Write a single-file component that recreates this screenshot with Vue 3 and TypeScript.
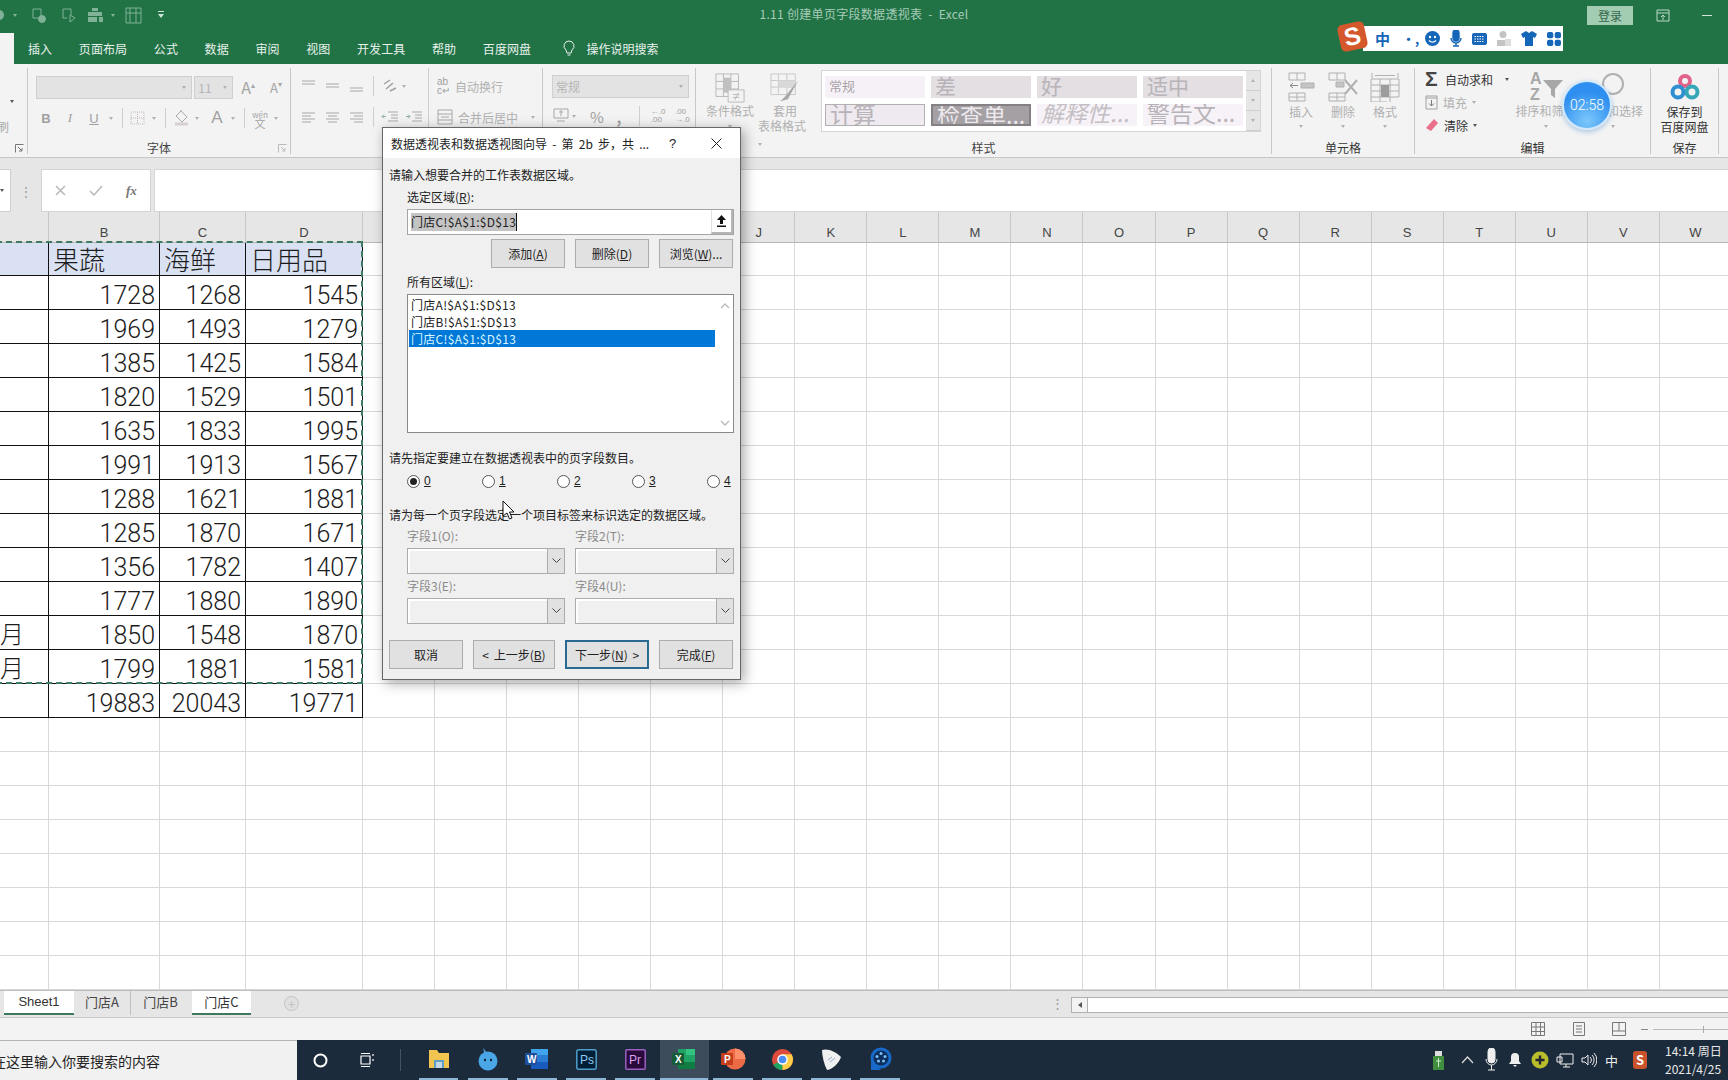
<script setup lang="ts">
const cols = ['', 'B', 'C', 'D', 'E', 'F', 'G', 'H', 'I', 'J', 'K', 'L', 'M', 'N', 'O', 'P', 'Q', 'R', 'S', 'T', 'U', 'V', 'W']
const data: string[][] = [
  ['', '果蔬', '海鲜', '日用品'],
  ['', '1728', '1268', '1545'],
  ['', '1969', '1493', '1279'],
  ['', '1385', '1425', '1584'],
  ['', '1820', '1529', '1501'],
  ['', '1635', '1833', '1995'],
  ['', '1991', '1913', '1567'],
  ['', '1288', '1621', '1881'],
  ['', '1285', '1870', '1671'],
  ['', '1356', '1782', '1407'],
  ['', '1777', '1880', '1890'],
  ['月', '1850', '1548', '1870'],
  ['月', '1799', '1881', '1581'],
  ['', '19883', '20043', '19771'],
]
const rows = Array.from({ length: 22 }, (_, i) => i)
const colIdx = cols.map((_, i) => i)
function cell(r: number, c: number): string {
  return r < data.length && c < 4 ? data[r][c] : ''
}
function cellClass(r: number, c: number): string[] {
  const out: string[] = []
  if (r < data.length && c < 4) out.push('tb')
  if (r === 0 && c < 4) out.push('th')
  if (c === 0) out.push('first')
  return out
}
const alignTop = ['M1 2h13M1 5h13', 'M1 5h13M1 8h13', 'M1 9h13M1 12h13']
const alignRow = ['M1 3h13M1 6h9M1 9h13M1 12h9', 'M1 3h13M3 6h9M1 9h13M3 12h9', 'M1 3h13M5 6h9M1 9h13M5 12h9']
const radios = ['0', '1', '2', '3', '4']
const fields = [
  ['字段1(O):', '字段2(T):'],
  ['字段3(E):', '字段4(U):'],
]
const tabs = ['插入', '页面布局', '公式', '数据', '审阅', '视图', '开发工具', '帮助', '百度网盘']
const styleCells = [
  { t: '常规', c: 's-norm' },
  { t: '差', c: 's-bad' },
  { t: '好', c: 's-bad' },
  { t: '适中', c: 's-bad' },
  { t: '计算', c: 's-calc' },
  { t: '检查单...', c: 's-check' },
  { t: '解释性...', c: 's-expl' },
  { t: '警告文...', c: 's-warn' },
]
const runs = ['u1', 'u2', 'u3', 'u4', 'u5', 'u6', 'u7', 'u8', 'u9', 'u10']
</script>

<template>
  <div class="page">
    <!-- title bar -->
    <header class="titlebar">
      <div class="qat">
        <svg class="q1" width="10" height="14" viewBox="0 0 10 14"><circle cx="1" cy="7" r="5" fill="#7fb296" /></svg>
        <i class="caret q-c1"></i>
        <svg class="q2" width="16" height="17" viewBox="0 0 16 17" fill="none" stroke="#7fb296"><path d="M2 2h8v7M2 2v9h5" /><circle cx="11" cy="12" r="3.500" fill="#7fb296" /></svg>
        <svg class="q3" width="16" height="17" viewBox="0 0 16 17" fill="none" stroke="#7fb296"><path d="M2 2h8v6M2 2v9h4M9 8v7l5-4z" /></svg>
        <svg class="q4" width="18" height="16" viewBox="0 0 18 16" fill="#7fb296"><path d="M5 1h6v3H5zM1 5h14v4H1zM1 10h9v5H1zM12 10h4v5h-4z" /></svg>
        <i class="caret q-c2"></i>
        <svg class="q5" width="17" height="17" viewBox="0 0 17 17" fill="none" stroke="#7fb296"><path d="M1 1h15v15H1zM5 1v15M11 1v15M1 6h15" /></svg>
        <svg class="q6" width="8" height="10" viewBox="0 0 8 10" fill="#cfe3d8"><path d="M1 1h6v1H1zM1 4h6L4 8z" /></svg>
      </div>
      <div class="doc-title">1.11 创建单页字段数据透视表&nbsp; -&nbsp; Excel</div>
      <div class="win">
        <span class="login">登录</span>
        <svg class="win-box" width="14" height="13" viewBox="0 0 14 13" fill="none" stroke="#bcd8c8"><path d="M1 1h12v11H1zM1 4h12M7 11V6M5 8l2-2 2 2" /></svg>
        <i class="win-min"></i>
      </div>
    </header>

    <!-- tab row -->
    <nav class="tabrow">
      <span class="home"></span>
      <span v-for="t in tabs" :key="t" class="tab">{{ t }}</span>
      <svg class="bulb" width="12" height="17" viewBox="0 0 12 17" fill="none" stroke="#e8f1ec"><path d="M6 1a5 5 0 0 0-3 9l1 3h4l1-3A5 5 0 0 0 6 1zM4.500 15h3" /></svg>
      <span class="search">操作说明搜索</span>
    </nav>

    <!-- ribbon -->
    <section class="ribbon">
      <div class="rg g-clip">
        <i class="caret dk clip-c"></i>
        <span class="clip-t">刷</span>
        <svg class="launch" width="9" height="9" viewBox="0 0 9 9" fill="none" stroke="#777"><path d="M.5 8.500v-8h8M3 3l4 4M7 4v3H4" /></svg>
      </div>

      <div class="rg g-font">
        <div class="r1">
          <div class="combo c-font"><i class="caret"></i></div>
          <div class="combo c-size"><span>11</span><i class="caret"></i></div>
          <span class="bigA">A<sup>▴</sup></span>
          <span class="bigA small">A<sup>▾</sup></span>
        </div>
        <div class="r2">
          <b class="fi w24">B</b>
          <em class="fi w24 it">I</em>
          <u class="fi w24">U</u>
          <i class="slot w10"><i class="caret"></i></i>
          <i class="vs w12"></i>
          <svg class="ic w20" width="20" height="16" viewBox="0 0 20 16" fill="none" stroke="#c0b8c0" stroke-dasharray="1 1"><path d="M3 2h13v12H3zM9.500 2v12M3 8h13" /></svg>
          <i class="slot w12"><i class="caret"></i></i>
          <i class="vs w10"></i>
          <svg class="ic w22" width="22" height="18" viewBox="0 0 22 18" fill="none" stroke="#a8a8a8"><path d="M11 2l6 6-5 5-6-6zM11 2V1" /><path d="M5 15h13" stroke="#d8d0d0" stroke-width="3" /></svg>
          <i class="slot w10"><i class="caret"></i></i>
          <span class="fi fA">A</span>
          <i class="slot w6"><i class="caret"></i></i>
          <i class="vs w16"></i>
          <span class="wen"><small>wén</small><br />文</span>
          <i class="slot w16"><i class="caret"></i></i>
        </div>
        <div class="lbl">字体</div>
        <svg class="launch" width="9" height="9" viewBox="0 0 9 9" fill="none" stroke="#bbb"><path d="M.5 8.500v-8h8M3 3l4 4M7 4v3H4" /></svg>
      </div>

      <div class="rg g-align">
        <div class="al-left">
          <div class="r1 al-r">
            <svg v-for="p in alignTop" :key="p" class="al" width="15" height="15" viewBox="0 0 15 15" fill="none" stroke="#a8a8a8"><path :d="p" /></svg>
            <i class="vs w1"></i>
            <svg class="ic m-2" width="18" height="16" viewBox="0 0 18 16" fill="none" stroke="#a0a0a0" stroke-width="1.500"><path d="M3 6l6-4M5 11l7-6M9 13l6-3" /></svg>
            <i class="slot w8 m-c"><i class="caret"></i></i>
          </div>
          <div class="r2 al-r">
            <svg v-for="p in alignRow" :key="p" class="al" width="15" height="15" viewBox="0 0 15 15" fill="none" stroke="#a8a8a8"><path :d="p" /></svg>
            <i class="vs w1"></i>
            <svg class="ic m-2" width="18" height="14" viewBox="0 0 18 14" fill="none" stroke="#a8a8a8"><path d="M7 2h10M10 5h7M10 8h7M7 11h10" /><path d="M5 6.500H1M3 4.500l-2 2 2 2" stroke="#8fb0a0" /></svg>
            <svg class="ic m-3" width="18" height="14" viewBox="0 0 18 14" fill="none" stroke="#a8a8a8"><path d="M7 2h10M10 5h7M10 8h7M7 11h10" /><path d="M1 6.500h4M3 4.500l2 2-2 2" stroke="#8fb0a0" /></svg>
          </div>
        </div>
        <i class="vline"></i>
        <div class="al-right">
          <div class="wrap-row"><span class="ab">ab<br />c↵</span><span class="fade">自动换行</span></div>
          <div class="wrap-row merge"><svg width="16" height="16" viewBox="0 0 16 16" fill="none" stroke="#a8a8a8"><path d="M1 1h14v14H1zM1 5h14M1 11h14M4 8h8" /></svg><span class="fade">合并后居中</span><i class="caret"></i></div>
        </div>
      </div>

      <div class="rg g-num">
        <div class="combo c-num"><span>常规</span><i class="caret"></i></div>
        <div class="r2 num-r">
          <svg class="ic" width="16" height="18" viewBox="0 0 16 18" fill="none" stroke="#a8a8a8"><path d="M1 2h14v9H1zM4 14h8M6 5h4M8 3v6" /></svg>
          <i class="slot w10"><i class="caret"></i></i>
          <span class="pct">%</span>
          <span class="comma">,</span>
          <i class="vs w18"></i>
          <span class="dec">←.0<br />.00</span>
          <span class="dec d2">.00<br />→.0</span>
        </div>
      </div>

      <div class="rg g-style">
        <div class="big-btn b-cond">
          <svg width="30" height="30" viewBox="0 0 32 32" fill="none" stroke="#b8b8b8"><path d="M1 1h24v24H1zM9 1v24M17 1v24M1 9h24M1 17h24" /><path d="M9 5h8v16H9z" fill="#c0c0c0" stroke="none" /><path d="M14 18h17v13H14z" fill="#f3f3f3" /><path d="M19 23h7M19 26h7M25 21l-4 8" /></svg>
          <span class="fade">条件格式</span>
          <i class="caret"></i>
        </div>
        <div class="big-btn b-table">
          <svg width="30" height="30" viewBox="0 0 32 32" fill="none" stroke="#c8c8c8"><path d="M1 1h26v22H1zM9 1v22M18 1v22M1 8h26M1 15h26" /><path d="M9 8h18v7H9z" fill="#d8d8d8" stroke="none" /><path d="M30 8L16 25l-5 5 8-2z" fill="#a8a8a8" stroke="none" /></svg>
          <span class="fade">套用</span>
          <span class="fade">表格格式 <i class="caret"></i></span>
        </div>
        <div class="gallery">
          <div class="g-cells">
            <span v-for="s in styleCells" :key="s.t" :class="['sc', s.c]"><span>{{ s.t }}</span></span>
          </div>
          <div class="g-scroll">
            <span><i class="caret up"></i></span><span><i class="caret"></i></span><span><i class="caret"></i></span>
          </div>
        </div>
        <div class="lbl">样式</div>
      </div>

      <div class="rg g-cellsgrp">
        <div class="cell-btns">
          <div class="big-btn">
            <svg width="30" height="30" viewBox="0 0 30 30" fill="none" stroke="#b0b0b0"><path d="M3 1h16v7H3zM11 1v7M3 21h16v8H3zM11 21v8M3 25h16" /><path d="M15 11h13v5H15z" fill="#c4c4c4" /><path d="M12 13.500H4M7 11l-3 2.500L7 16" stroke="#8a8a8a" /></svg>
            <span class="fade">插入</span><i class="caret"></i>
          </div>
          <div class="big-btn">
            <svg width="30" height="30" viewBox="0 0 30 30" fill="none" stroke="#b0b0b0"><path d="M1 1h16v7H1zM9 1v7M1 21h16v8H1zM9 21v8M1 25h16" /><path d="M8 10h8v5H8z" fill="#c4c4c4" /><path d="M17 8l12 14M29 8L17 22" stroke-width="2" /></svg>
            <span class="fade">删除</span><i class="caret"></i>
          </div>
          <div class="big-btn">
            <svg width="30" height="30" viewBox="0 0 30 30" fill="none" stroke="#b0b0b0"><path d="M2 1v5M28 1v5M5 3.500h20" /><path d="M1 7h28v18H1zM10 7v23M20 7v23M1 13h28M1 19h28M1 25v5h16" /><path d="M11 13h8v12h-8z" fill="#9c9c9c" stroke="none" /></svg>
            <span class="fade">格式</span><i class="caret"></i>
          </div>
        </div>
        <div class="lbl dk">单元格</div>
      </div>

      <div class="rg g-edit">
        <div class="ed-col">
          <div class="ed-row"><span class="sigma">Σ</span><span class="dk">自动求和</span><i class="caret dk e-gap"></i></div>
          <div class="ed-row"><svg width="13" height="15" viewBox="0 0 13 15" fill="none" stroke="#a0a0a0"><path d="M1 1h11v13H1zM1 3h11" /><path d="M6.500 5v6M4 8.500l2.500 2.500L9 8.500" stroke="#777" /></svg><span class="fade">填充</span><i class="caret"></i></div>
          <div class="ed-row"><svg width="14" height="14" viewBox="0 0 14 14"><path d="M9 1l4 4-7 8-5-3z" fill="#ea6f8a" /></svg><span class="dk">清除</span><i class="caret dk"></i></div>
        </div>
        <div class="big-btn b-sort">
          <svg width="36" height="30" viewBox="0 0 36 30"><text x="2" y="13" class="svgt">A</text><text x="2" y="29" class="svgt">Z</text><path d="M15 9h20l-8 9v9l-4-3v-6z" fill="#a8a8a8" /></svg>
          <span class="fade">排序和筛选</span><i class="caret"></i>
        </div>
        <div class="big-btn b-find">
          <svg width="24" height="30" viewBox="0 0 24 30" fill="none" stroke="#b0b0b0" stroke-width="2"><circle cx="12" cy="13" r="10" /></svg>
          <span class="fade">查找和选择</span><i class="caret"></i>
        </div>
        <div class="lbl dk">编辑</div>
      </div>

      <div class="rg g-save">
        <svg class="baidu" width="30" height="28" viewBox="0 0 30 28" fill="none" stroke-width="4"><circle cx="15" cy="8" r="5" stroke="#e0648a" /><circle cx="8" cy="19" r="5.500" stroke="#2f8fd0" /><circle cx="22" cy="19" r="5.500" stroke="#35a7b8" /></svg>
        <span class="dk sv">保存到</span>
        <span class="dk sv">百度网盘</span>
        <div class="lbl dk">保存</div>
      </div>
      <div class="g-end"></div>
    </section>

    <!-- formula bar -->
    <section class="fbar">
      <div class="namebox"><i class="caret dk"></i></div>
      <span class="fdots">⋮</span>
      <div class="fxbox">
        <svg width="11" height="11" viewBox="0 0 11 11" stroke="#b8b8b8" stroke-width="1.500"><path d="M1 1l9 9M10 1l-9 9" /></svg>
        <svg width="14" height="11" viewBox="0 0 14 11" fill="none" stroke="#b8b8b8" stroke-width="1.500"><path d="M1 6l4 4 8-9" /></svg>
        <em class="fx">fx</em>
      </div>
      <div class="finput"></div>
    </section>

    <!-- column headers -->
    <section class="colhead">
      <span v-for="c in cols" :key="c" class="ch">{{ c }}</span>
    </section>

    <!-- sheet -->
    <section class="sheet">
      <template v-for="r in rows" :key="r">
        <div v-for="c in colIdx" :key="c" class="gc" :class="cellClass(r, c)">{{ cell(r, c) }}</div>
      </template>
      <div class="ants"></div>
    </section>

    <!-- sheet tabs -->
    <section class="sheettabs">
      <span class="stab on s1">Sheet1</span>
      <span class="stab s2">门店A</span>
      <span class="stab s3">门店B</span>
      <span class="stab on s4">门店C</span>
      <span class="addsheet">+</span>
      <span class="hdots">⋮</span>
      <div class="hscroll"><span class="harrow"><i class="tri"></i></span></div>
    </section>

    <!-- status bar -->
    <section class="status">
      <svg width="14" height="14" viewBox="0 0 14 14" fill="none" stroke="#777"><path d="M.5.500h13v13H.5zM5 .5v13M9.500.5v13M.5 5h13M.5 9.500h13" /></svg>
      <svg class="st2" width="14" height="14" viewBox="0 0 14 14" fill="none" stroke="#777"><path d="M1.500.500h11v13h-11zM4 4h6M4 7h6M4 10h6" /></svg>
      <svg class="st3" width="14" height="14" viewBox="0 0 14 14" fill="none" stroke="#777"><path d="M.5.500h13v13H.5zM.5 9h13M7 .5V9" /></svg>
      <i class="zoom-minus"></i>
      <i class="zoom-track"><i class="zoom-tick"></i></i>
    </section>

    <!-- taskbar -->
    <footer class="taskbar">
      <div class="tsearch"><span>在这里输入你要搜索的内容</span></div>
      <svg class="cortana" width="15" height="15" viewBox="0 0 15 15" fill="none" stroke="#fff" stroke-width="2"><circle cx="7.500" cy="7.500" r="6" /></svg>
      <svg class="taskview" width="16" height="14" viewBox="0 0 16 14" fill="none" stroke="#fff"><path d="M1 3h9v8H1zM1 .5h9M1 13.500h9M13 1v2M13 6v2" stroke-width="1.200" /></svg>
      <i class="tsep"></i>
      <div class="apps">
        <span class="app">
          <svg width="22" height="20" viewBox="0 0 22 20"><path d="M1 1h8l2 3h10v15H1z" fill="#f2c550" /><path d="M6 11h10v8H6z" fill="#5f9fc6" /><path d="M8 13h6v6H8z" fill="#c4d9e4" /></svg>
        </span>
        <span class="app">
          <svg width="22" height="24" viewBox="0 0 22 24"><circle cx="11" cy="14" r="9.500" fill="#4aa6e6" /><path d="M6 1l5 6-3 2z" fill="#4aa6e6" /><circle cx="8" cy="13" r="1.200" fill="#123" /><circle cx="14" cy="13" r="1.200" fill="#123" /></svg>
        </span>
        <span class="app">
          <svg width="24" height="22" viewBox="0 0 24 22"><path d="M6 1h17v20H6z" fill="#2b7cd3" /><path d="M6 1h17v6H6z" fill="#41a5ee" /><path d="M6 14h17v7H6z" fill="#185abd" /><rect x="0" y="5" width="12" height="12" rx="1" fill="#1d4f9e" /><text x="2" y="15" class="wt">W</text></svg>
        </span>
        <span class="app">
          <svg width="21" height="21" viewBox="0 0 21 21"><rect x=".8" y=".8" width="19.400" height="19.400" rx="2" fill="#001e36" stroke="#4f9ecb" stroke-width="1.500" /><text x="4" y="15" class="ps">Ps</text></svg>
        </span>
        <span class="app">
          <svg width="21" height="21" viewBox="0 0 21 21"><rect x=".8" y=".8" width="19.400" height="19.400" rx="1" fill="#2a0a3a" stroke="#9b5fc0" stroke-width="1.500" /><text x="4" y="15" class="pr">Pr</text></svg>
        </span>
        <span class="app active">
          <svg width="24" height="22" viewBox="0 0 24 22"><path d="M6 1h17v20H6z" fill="#21a366" /><path d="M14 1h9v6h-9z" fill="#33c481" /><path d="M6 14h17v7H6z" fill="#107c41" /><rect x="0" y="5" width="12" height="12" rx="1" fill="#185c37" /><text x="3" y="15" class="wt">X</text></svg>
        </span>
        <span class="app">
          <svg width="25" height="22" viewBox="0 0 25 22"><circle cx="14" cy="11" r="10.500" fill="#ed6c47" /><path d="M14 .5A10.500 10.500 0 0 1 24.500 11H14z" fill="#ff8f6b" /><rect x="0" y="5" width="12" height="12" rx="1" fill="#c43e1c" /><text x="3" y="15" class="wt">P</text></svg>
        </span>
        <span class="app">
          <svg width="23" height="23" viewBox="0 0 24 24"><circle cx="12" cy="12" r="11" fill="#dd4b3e" /><path d="M12 12L2.500 17.500A11 11 0 0 0 12 23z" fill="#1da462" /><path d="M12 12v11a11 11 0 0 0 9.500-16.500H12z" fill="#ffcd46" /><circle cx="12" cy="12" r="5.500" fill="#fff" /><circle cx="12" cy="12" r="4" fill="#4c8bf5" /></svg>
        </span>
        <span class="app">
          <svg width="22" height="23" viewBox="0 0 22 23"><path d="M2 2c6-2 14 2 19 7-2 6-8 12-14 13C4 16 2 8 2 2z" fill="#f0f0f0" /><path d="M8 12l4-3M10 14l5-4" stroke="#9ac" fill="none" /></svg>
        </span>
        <span class="app">
          <svg width="23" height="24" viewBox="0 0 23 24"><circle cx="12" cy="11" r="10.500" fill="#1969c8" /><path d="M2 12v11h10z" fill="#1969c8" /><circle cx="12" cy="11" r="7.500" fill="#0c2f60" /><g fill="#7fc0f5"><circle cx="12" cy="6.500" r="1.500" /><circle cx="8" cy="9.500" r="1.500" /><circle cx="16" cy="9.500" r="1.500" /><circle cx="9.500" cy="14" r="1.500" /><circle cx="14.500" cy="14" r="1.500" /></g></svg>
        </span>
      </div>
      <div class="runbars"><i v-for="u in runs" :key="u" :class="['rb', u]"></i></div>
      <div class="tray">
        <svg width="11" height="19" viewBox="0 0 11 19"><path d="M2 0h7v5H2z" fill="#ddd" /><path d="M0 5h11v14H0z" fill="#3f8f3f" /><path d="M5.500 7v9M3 10h5" stroke="#cfe9cf" /></svg>
        <svg class="t-up" width="13" height="8" viewBox="0 0 13 8" fill="none" stroke="#ddd" stroke-width="1.200"><path d="M1 7l5.500-6L12 7" /></svg>
        <svg class="t-mic" width="13" height="24" viewBox="0 0 13 24" fill="none" stroke="#eee"><rect x="3" y="0" width="7" height="15" rx="3.500" fill="#eee" /><path d="M1 11a5.500 6 0 0 0 11 0M6.500 17v5M3 22h7" /></svg>
        <svg class="t-bell" width="14" height="16" viewBox="0 0 14 16" fill="#eee"><path d="M7 1a4 4 0 0 0-4 4v4l-2 3h12l-2-3V5a4 4 0 0 0-4-4zM5 13h4l-2 2z" /></svg>
        <svg class="t-plus" width="18" height="18" viewBox="0 0 18 18"><circle cx="9" cy="9" r="8.500" fill="#b9bd2c" /><path d="M9 4.500v9M4.500 9h9" stroke="#223" stroke-width="2.400" /></svg>
        <svg class="t-net" width="18" height="15" viewBox="0 0 18 15" fill="none" stroke="#eee"><path d="M4 1h13v10H4zM1 4h5v5H1zM10 11v3M7 14h7" /></svg>
        <svg class="t-vol" width="16" height="16" viewBox="0 0 16 16" fill="none" stroke="#eee"><path d="M1 6h3l3-3v10l-3-3H1zM9 5a4 4 0 0 1 0 6M11 3a7 7 0 0 1 0 10M13 1a10 10 0 0 1 0 14" /></svg>
        <span class="t-zh">中</span>
        <span class="t-s">S</span>
        <div class="clock"><span>14:14 周日</span><span>2021/4/25</span></div>
      </div>
    </footer>

    <!-- overlays -->
    <div class="sogou">
      <span class="sg-s">S</span>
      <span class="sg-zh">中</span>
      <span class="sg-p">•,</span>
      <svg width="15" height="15" viewBox="0 0 15 15"><circle cx="7.500" cy="7.500" r="7.500" fill="#1565b8" /><circle cx="5" cy="6" r="1.200" fill="#fff" /><circle cx="10" cy="6" r="1.200" fill="#fff" /><path d="M4 9.500c2 2 5 2 7 0" stroke="#fff" fill="none" stroke-width="1.300" /></svg>
      <svg width="12" height="17" viewBox="0 0 12 17" fill="none" stroke="#1565b8" stroke-width="1.400"><rect x="3" y="0" width="6" height="11" rx="3" fill="#1565b8" /><path d="M1 8a5 5 0 0 0 10 0M6 13v3M3 16h6" /></svg>
      <svg width="15" height="12" viewBox="0 0 15 12"><rect width="15" height="12" rx="2" fill="#1565b8" /><path d="M2.500 3.500h10M2.500 6h10M2.500 8.500h10" stroke="#fff" stroke-dasharray="1.500 1" /></svg>
      <svg width="14" height="15" viewBox="0 0 14 15" fill="#c4c4c4"><circle cx="6" cy="3.500" r="3.500" /><path d="M0 15V9h8v6z" /><path d="M8 8h6v7H8z" fill="#ddd" /></svg>
      <svg width="16" height="15" viewBox="0 0 16 15" fill="#1565b8"><path d="M5 0L0 3l2 4 2-1v9h8V6l2 1 2-4-5-3-3 2z" /></svg>
      <svg width="14" height="14" viewBox="0 0 14 14" fill="#1565b8"><rect width="6.300" height="6.300" rx="2" /><rect x="7.700" width="6.300" height="6.300" rx="2" /><rect y="7.700" width="6.300" height="6.300" rx="2" /><rect x="7.700" y="7.700" width="6.300" height="6.300" rx="2" /></svg>
    </div>

    <div class="timer">02:58</div>

    <div class="dialog">
      <div class="d-title">
        <span class="d-name">数据透视表和数据透视图向导 - 第 2b 步，共 ...</span>
        <span class="d-q">?</span>
        <svg class="d-x" width="11" height="11" viewBox="0 0 11 11" stroke="#222" fill="none"><path d="M.5.500l10 10M10.500.5l-10 10" /></svg>
      </div>
      <div class="d-body">
        <p class="t m8">请输入想要合并的工作表数据区域。</p>
        <p class="t ind m4">选定区域(<u>R</u>):</p>
        <div class="d-input m3">
          <span class="sel">门店C!$A$1:$D$13</span><i class="car"></i>
          <span class="upbtn"><svg width="11" height="12" viewBox="0 0 11 12" fill="#111"><path d="M5.500 0l4.500 5H7v4H4V5H1zM1 10.500h9V12H1z" /></svg></span>
        </div>
        <div class="d-btns1 m4">
          <button class="btn">添加(<u>A</u>)</button>
          <button class="btn">删除(<u>D</u>)</button>
          <button class="btn">浏览(<u>W</u>)...</button>
        </div>
        <p class="t ind m5">所有区域(<u>L</u>):</p>
        <div class="d-list m3">
          <div class="li">门店A!$A$1:$D$13</div>
          <div class="li">门店B!$A$1:$D$13</div>
          <div class="li cur">门店C!$A$1:$D$13</div>
          <svg class="ls-up" width="10" height="6" viewBox="0 0 10 6" fill="none" stroke="#bbb" stroke-width="1.400"><path d="M1 5l4-4 4 4" /></svg>
          <svg class="ls-dn" width="10" height="6" viewBox="0 0 10 6" fill="none" stroke="#bbb" stroke-width="1.400"><path d="M1 1l4 4 4-4" /></svg>
        </div>
        <p class="t m16">请先指定要建立在数据透视表中的页字段数目。</p>
        <div class="d-radios m5">
          <label v-for="(n, i) in radios" :key="n" class="radio"><i :class="['rd', { on: i === 0 }]"></i><u>{{ n }}</u></label>
        </div>
        <p class="t m16">请为每一个页字段选定一个项目标签来标识选定的数据区域。</p>
        <div v-for="(pair, idx) in fields" :key="idx" class="d-fields">
          <div v-for="f in pair" :key="f" class="fld">
            <span class="t off">{{ f }}</span>
            <div class="fcombo"><span class="farrow"><svg width="9" height="6" viewBox="0 0 9 6" fill="none" stroke="#444"><path d="M.5.500l4 4 4-4" /></svg></span></div>
          </div>
        </div>
        <div class="d-foot">
          <button class="btn f1">取消</button>
          <button class="btn f2">&lt; 上一步(<u>B</u>)</button>
          <button class="btn f3">下一步(<u>N</u>) &gt;</button>
          <button class="btn f4">完成(<u>F</u>)</button>
        </div>
      </div>
      <svg class="cursor" width="14" height="20" viewBox="0 0 14 20"><path d="M1 1v15l4-3 2.500 6 2.500-1-2.500-6H12z" fill="#fff" stroke="#111" /></svg>
    </div>
  </div>
</template>

<style scoped>
.page {
  position: relative;
  width: 1728px;
  height: 1080px;
  overflow: hidden;
  display: flex;
  flex-direction: column;
  background: #fff;
  font-family: "Noto Sans CJK SC", "Noto Sans", sans-serif;
  font-size: 12px;
  color: #333;
}
p { margin: 0; }
i { font-style: normal; }
.caret {
  display: inline-block;
  width: 0;
  height: 0;
  border-left: 2.500px solid transparent;
  border-right: 2.500px solid transparent;
  border-top: 3px solid #b0b0b0;
}
.caret.dk { border-top-color: #555; }
.caret.up { border-top: 0; border-bottom: 3px solid #b0b0b0; }

/* title */
.titlebar {
  height: 33px;
  flex: none;
  background: #217346;
  display: grid;
  grid-template-columns: 1fr auto 1fr;
  align-items: center;
}
.qat { display: flex; align-items: center; margin-top: -3px; }
.qat .q1 { margin-left: -2px; }
.qat .caret { border-top-color: #7fb296; }
.q-c1 { margin-left: 5px; }
.q2 { margin-left: 14px; }
.q3 { margin-left: 14px; }
.q4 { margin-left: 10px; }
.q-c2 { margin-left: 6px; }
.q5 { margin-left: 10px; }
.q6 { margin-left: 15px; }
.doc-title { color: #a6cbb7; font-size: 12px; line-height: 28px; letter-spacing: .3px; margin-top: -5px; }
.win { display: flex; align-items: center; justify-content: flex-end; }
.login {
  width: 46px; height: 19px; margin-right: 23px; margin-top: -2px;
  background: #a3cdb3; color: #35684c; text-align: center; line-height: 19px;
}
.win-box { margin-right: 32px; margin-top: -3px; }
.win-min { width: 10px; height: 1px; background: #cfe3d8; margin-right: 16px; margin-top: -3px; }

.tabrow {
  height: 31px;
  flex: none;
  background: #217346;
  display: flex;
  align-items: center;
  color: #e8f1ec;
  gap: 26.600px;
}
.home { width: 14px; height: 31px; background: #f3f3f3; margin-right: -12.600px; }
.tab { font-size: 12px; letter-spacing: .1px; margin-top: -1px; }
.search { margin-top: -1px; }
.bulb { margin-left: 5px; margin-right: -15px; }

/* ribbon */
.ribbon {
  height: 94px;
  flex: none;
  background: #f3f3f3;
  border-bottom: 1px solid #c6c6c6;
  box-sizing: border-box;
  display: flex;
  align-items: flex-start;
}
.rg {
  position: relative;
  height: 86px;
  margin-top: 4px;
  border-right: 1px solid #c8c8c8;
  box-sizing: border-box;
  flex: none;
}
.g-clip { width: 28px; }
.clip-c { position: absolute; left: 10px; top: 32px; }
.clip-t { position: absolute; left: -3px; top: 50px; color: #a8a8a8; font-size: 12px; }
.launch { position: absolute; right: 3px; bottom: 1px; }
.lbl {
  position: absolute;
  left: 0;
  right: 0;
  bottom: -3px;
  text-align: center;
  font-size: 12px;
  line-height: 18px;
  color: #444;
}
.dk { color: #333; }
.fade { color: #b0b0b0; font-size: 12px; }
.r1 { display: flex; align-items: center; }
.r2 { display: flex; align-items: center; height: 24px; }
.g-font { width: 263px; }
.g-font .r1 { padding: 7px 0 0 8px; }
.g-font .r2 { padding-left: 6px; margin-top: 7px; }
.combo {
  height: 23px; box-sizing: border-box; background: #e3e3e3; border: 1px solid #cfcfcf;
  display: flex; align-items: center; justify-content: flex-end; padding-right: 5px;
}
.c-font { width: 157px; }
.c-size { width: 39px; margin-left: 2px; justify-content: space-between; padding-left: 3px; color: #b5b5b5; }
.bigA { width: 28px; text-align: center; font-size: 16px; color: #a5a5a5; margin-left: 1px; }
.bigA.small { font-size: 13px; margin-left: 0; }
.bigA sup { font-size: 8px; vertical-align: 6px; line-height: 0; }
.fi { text-align: center; color: #a0a0a0; font-family: "Liberation Sans", sans-serif; font-size: 13px; }
.it { font-family: "Liberation Serif", serif; }
.w1 { width: 1px; } .w6 { width: 6px; } .w8 { width: 8px; } .w10 { width: 10px; } .w12 { width: 12px; }
.w16 { width: 16px; } .w18 { width: 18px; } .w20 { width: 20px; } .w22 { width: 22px; } .w24 { width: 24px; }
.slot { display: flex; justify-content: center; align-items: center; flex: none; }
.vs { position: relative; display: block; height: 20px; flex: none; }
.vs::after { content: ""; position: absolute; left: 50%; top: 0; bottom: 0; width: 1px; background: #cfcfcf; }
.vs.w1::after { left: 0; }
.ic { flex: none; }
.al { flex: none; }
.m-2 { margin-left: -2px; }
.m-3 { margin-left: -3px; }
.m-c { margin-left: -8px; }
.fA { width: 26px; margin-left: 2px; font-size: 17px; }
.wen { width: 16px; font-size: 11px; line-height: 9px; text-align: center; color: #a5a5a5; }
.wen small { font-size: 8px; }

.g-align { width: 252px; display: flex; }
.al-left { width: 137px; padding-left: 10px; box-sizing: border-box; flex: none; }
.al-r { gap: 9px; }
.al-left .r1 { padding-top: 7px; height: 22px; }
.al-left .r2 { margin-top: 8px; }
.vline { width: 1px; height: 62px; background: #cfcfcf; flex: none; }
.al-right { padding: 6px 0 0 8px; }
.wrap-row { display: flex; align-items: center; gap: 4px; height: 24px; }
.wrap-row.merge { margin-top: 7px; gap: 5px; }
.merge .caret { margin-left: 8px; }
.ab { font-size: 10px; line-height: 9px; color: #a0a0a0; width: 14px; font-family: "Liberation Sans", sans-serif; }

.g-num { width: 153px; padding: 7px 0 0 9px; }
.c-num { width: 137px; justify-content: space-between; padding-left: 3px; color: #b5b5b5; }
.num-r { margin-top: 6px; padding-left: 1px; }
.pct { margin-left: 7px; width: 24px; font-size: 15px; color: #a0a0a0; text-align: center; }
.comma { width: 24px; font-size: 15px; color: #a0a0a0; text-align: center; font-weight: 700; }
.dec { font-size: 8px; line-height: 8px; color: #a0a0a0; margin-left: 3px; width: 22px; font-family: "Liberation Sans", sans-serif; white-space: nowrap; }
.d2 { margin-left: 4px; }

.g-style { width: 576px; display: flex; padding-left: 8px; }
.big-btn { display: flex; flex-direction: column; align-items: center; line-height: 15px; }
.b-cond { width: 52px; padding-top: 5px; }
.b-cond .caret { margin-top: 7px; }
.b-table { width: 54px; margin-left: 2px; padding-top: 5px; }
.gallery {
  margin-left: 9px; margin-top: 2px; width: 440px; height: 62px; box-sizing: border-box;
  border: 1px solid #d4d4d4; background: #fff; display: flex;
}
.g-cells {
  width: 425px; box-sizing: border-box; padding: 5px 0 0 3px; display: grid;
  grid-template-columns: repeat(4, 100px); grid-template-rows: 22px 22px; column-gap: 6px; row-gap: 6px;
}
.sc { overflow: hidden; white-space: nowrap; line-height: 21px; padding-left: 4px; box-sizing: border-box; color: #b8b3b8; font-size: 21px; }
.sc span { display: block; margin-top: -1px; }
.s-norm { background: #f6f1f6; font-size: 13px; color: #a8a3a8; }
.s-bad { background: #e3dfe3; }
.s-calc { background: #efeaef; border: 1px solid #b3afb3; font-size: 23px; }
.s-check { background: #a4a0a4; border: 2px solid #848084; color: #ece8ec; font-size: 23px; }
.s-expl { background: #f7f2f7; font-style: italic; color: #c4bfc4; font-size: 23px; }
.s-warn { background: #f7f2f7; font-size: 23px; }
.s-calc span, .s-check span, .s-expl span, .s-warn span { margin-top: -2px; }
.g-scroll { width: 14px; flex: none; display: flex; flex-direction: column; background: #e6e6e6; }
.g-scroll span { flex: 1; display: flex; align-items: center; justify-content: center; border-bottom: 1px solid #cfcfcf; }

.g-cellsgrp { width: 143px; }
.cell-btns { display: flex; padding: 4px 0 0 14px; gap: 12px; }
.cell-btns .big-btn { width: 30px; }
.cell-btns svg { margin-bottom: 2px; }
.cell-btns .caret { margin-top: 6px; }
.g-edit { width: 236px; display: flex; }
.ed-col { width: 100px; padding: 0 0 0 10px; box-sizing: border-box; }
.ed-row { display: flex; align-items: center; gap: 5px; height: 22px; }
.ed-row + .ed-row { margin-top: 1px; }
.sigma { font-size: 21px; font-family: "Liberation Sans", sans-serif; font-weight: 700; color: #444; line-height: 20px; width: 15px; }
.e-gap { margin-left: 7px; }
.b-sort { width: 61px; padding-top: 3px; }
.b-sort .caret, .b-find .caret { margin-top: 7px; }
.b-sort svg { margin-bottom: 2px; }
.b-find { width: 74px; padding-top: 3px; }
.b-find svg { margin-bottom: 2px; }
.svgt { font-size: 16px; font-weight: 700; fill: #a8a8a8; font-family: "Liberation Sans", sans-serif; }
.g-save { width: 68px; display: flex; flex-direction: column; align-items: center; line-height: 15px; padding-top: 5px; }
.baidu { margin-bottom: 3px; }
.sv { font-size: 12px; }
.g-end { flex: 1; }

/* formula */
.fbar {
  height: 54px; flex: none; background: #e6e6e6; box-sizing: border-box; padding-top: 11px;
  display: flex; align-items: stretch; position: relative;
}
.namebox { width: 11px; background: #fff; border-right: 1px solid #d0d0d0; border-bottom: 1px solid #d0d0d0; border-top: 1px solid #d0d0d0; box-sizing: border-box; display: flex; align-items: center; }
.fdots { width: 30px; text-align: center; color: #999; line-height: 43px; font-size: 12px; }
.fxbox { width: 110px; box-sizing: border-box; background: #fff; border: 1px solid #d4d4d4; display: flex; align-items: center; gap: 23px; padding-left: 13px; }
.fx { font-family: "Liberation Serif", serif; font-weight: 700; font-size: 13px; color: #777; }
.finput { flex: 1; margin-left: 3px; background: #fff; border: 1px solid #d4d4d4; border-right: 0; }

.colhead {
  height: 31px; flex: none; background: #e6e6e6; display: grid;
  grid-template-columns: 49px 111px 86px 117px repeat(19, 72.050px);
  border-bottom: 1px solid #b8b8b8; box-sizing: border-box;
}
.ch { text-align: center; line-height: 42px; height: 30px; overflow: hidden; border-right: 1px solid #c6c6c6; font-size: 13px; color: #444; font-family: "Liberation Sans", sans-serif; box-sizing: border-box; }

.sheet {
  position: relative; flex: none; height: 747px; display: grid;
  grid-template-columns: 49px 111px 86px 117px repeat(19, 72.050px);
  grid-template-rows: 33px repeat(21, 34px);
  background: #fff;
}
.gc {
  box-sizing: border-box; border-right: 1px solid #d8d8d8; border-bottom: 1px solid #d8d8d8;
  font-family: Roboto, "Liberation Sans", sans-serif; font-size: 25px; font-weight: 300; color: #1c1c1c;
  text-align: right; padding-right: 4px; line-height: 39px; overflow: hidden; white-space: nowrap;
}
.gc.tb { border-right-color: #111; border-bottom-color: #111; }
.gc.first { font-family: "Noto Sans CJK SC", sans-serif; padding-right: 35px; font-size: 24px; line-height: 33px; }
.gc.th { background: #d9e1f2; font-family: "Noto Sans CJK SC", sans-serif; font-size: 26px; text-align: left; padding: 0 0 0 4px; line-height: 32px; font-weight: 300; }
.ants {
  position: absolute; left: -4px; top: -2px; width: 367px; height: 443px; box-sizing: border-box;
  border: 2px dashed #3f7a62; pointer-events: none;
}

/* sheet tabs */
.sheettabs {
  height: 28px; flex: none; background: #e6e6e6; border-top: 1px solid #bdbdbd; border-bottom: 1px solid #c8c8c8;
  box-sizing: border-box; display: flex; align-items: flex-start; font-size: 13px; color: #444;
}
.stab { height: 24px; line-height: 22px; text-align: center; box-sizing: border-box; flex: none; }
.stab.on { background: #fff; border-bottom: 2px solid #3d7a5c; color: #333; }
.s1 { width: 70px; margin-left: 4px; font-family: "Liberation Sans", sans-serif; }
.s2 { width: 57px; margin-left: 0; border-right: 1px solid #c0c0c0; }
.s3 { width: 59px; }
.s4 { width: 59px; margin-left: 2px; color: #217346; }
.addsheet { width: 15px; height: 15px; margin: 5px 0 0 33px; border-radius: 50%; border: 1px solid #c4c4c4; color: #c4c4c4; text-align: center; line-height: 13px; box-sizing: border-box; font-size: 13px; background: #e0e0e0; }
.hdots { margin-left: 752px; color: #999; line-height: 24px; width: 12px; text-align: center; }
.hscroll { flex: 1; margin: 6px 0 0 8px; height: 16px; box-sizing: border-box; background: #fff; border: 1px solid #b0b0b0; border-right: 0; }
.harrow { display: flex; width: 15px; height: 14px; border-right: 1px solid #b0b0b0; align-items: center; justify-content: center; background: #f3f3f3; }
.tri { width: 0; height: 0; border-top: 3.500px solid transparent; border-bottom: 3.500px solid transparent; border-right: 4px solid #555; }

/* status */
.status {
  height: 22px; flex: none; background: #f3f3f3; display: flex; align-items: center; padding-left: 1531px; box-sizing: border-box;
}
.st2 { margin-left: 27px; }
.st3 { margin-left: 26px; }
.zoom-minus { width: 7px; height: 1px; background: #888; margin-left: 15px; }
.zoom-track { position: relative; flex: 1; height: 1px; background: #bbb; margin-left: 5px; }
.zoom-tick { position: absolute; left: 50px; top: -3px; width: 1px; height: 7px; background: #aaa; }

/* taskbar */
.taskbar {
  position: relative; height: 40px; flex: none; background: #1c2b3b; display: flex; align-items: center;
}
.tsearch {
  width: 297px; height: 40px; background: #f1f1f1; border-top: 1px solid #b5b5b5; box-sizing: border-box;
  display: flex; align-items: center; overflow: hidden; color: #222; font-size: 14px; flex: none;
}
.tsearch span { margin-left: -8px; white-space: nowrap; }
.cortana { margin-left: 16px; flex: none; }
.taskview { margin-left: 32px; flex: none; }
.tsep { width: 1px; height: 22px; background: #445362; margin-left: 24px; flex: none; }
.apps { display: flex; align-items: center; margin-left: 13.500px; height: 40px; }
.app { width: 49px; height: 40px; display: flex; align-items: center; justify-content: center; flex: none; margin-top: -2px; }
.app.active { background: #3c4c5a; margin-top: 0; padding-bottom: 2px; box-sizing: border-box; }
.wt { font-size: 10px; font-weight: 700; fill: #fff; font-family: "Liberation Sans", sans-serif; }
.ps { font-size: 12px; fill: #8ccbf2; font-family: "Liberation Sans", sans-serif; }
.pr { font-size: 12px; fill: #d8a0f0; font-family: "Liberation Sans", sans-serif; }
.runbars { position: absolute; left: 0; top: 38px; height: 2px; width: 100%; }
.rb { position: absolute; top: 0; height: 2px; background: #8fb7d6; }
.u1 { left: 419px; width: 39px; } .u2 { left: 468px; width: 40px; } .u3 { left: 517px; width: 40px; }
.u4 { left: 566px; width: 40px; } .u5 { left: 615px; width: 40px; } .u6 { left: 660px; width: 48px; }
.u7 { left: 713px; width: 40px; } .u8 { left: 762px; width: 40px; } .u9 { left: 811px; width: 40px; } .u10 { left: 860px; width: 40px; }
.tray { position: absolute; left: 1433px; top: 0; right: 0; height: 40px; display: flex; align-items: center; color: #fff; }
.t-up { margin-left: 17px; }
.t-mic { margin-left: 11px; }
.t-bell { margin-left: 10px; }
.t-plus { margin-left: 9px; }
.t-net { margin-left: 7px; }
.t-vol { margin-left: 7px; }
.t-zh { margin-left: 8px; font-size: 13px; color: #eee; }
.t-s { margin-left: 15px; width: 14px; height: 18px; background: #c9532b; color: #fff; font-weight: 700; font-size: 13px; text-align: center; line-height: 18px; border-radius: 3px; }
.clock { margin-left: 18px; display: flex; flex-direction: column; font-size: 12px; line-height: 18px; color: #e8e8e8; white-space: nowrap; }

/* sogou */
.sogou {
  position: absolute; left: 1363px; top: 26px; width: 200px; height: 25px; background: #fff;
  display: flex; align-items: center; padding-left: 12px; box-sizing: border-box; gap: 10px; color: #1565b8;
}
.sg-s {
  position: absolute; left: -24px; top: -3px; width: 27px; height: 27px; background: #d5582c; color: #fff;
  font: 900 25px/27px "Liberation Sans", sans-serif; text-align: center; border-radius: 5px; transform: rotate(-12deg);
}
.sg-zh { font-size: 15px; font-weight: 700; line-height: 25px; margin-right: 2px; }
.sg-p { font-size: 13px; font-weight: 700; width: 13px; }

.timer {
  position: absolute; left: 1562px; top: 80px; width: 50px; height: 50px; box-sizing: border-box;
  border-radius: 50%; background: radial-gradient(circle at 50% 85%, #7cc8fb, #2f8ff0 65%); border: 2px solid #d3e9fb;
  box-shadow: 0 2px 5px rgba(60, 130, 200, .4); color: #fff; font-size: 14px; text-align: center; line-height: 46px;
  font-family: Roboto, sans-serif; font-weight: 300;
}

/* dialog */
.dialog {
  position: absolute; left: 382px; top: 127px; width: 359px; height: 553px; box-sizing: border-box;
  background: #f0f0f0; border: 1px solid #666; box-shadow: 3px 3px 12px rgba(0, 0, 0, .35); color: #222;
}
.d-title { height: 30px; background: #fff; display: flex; align-items: center; padding-left: 8px; position: relative; }
.d-name { font-size: 12px; width: 276px; white-space: nowrap; word-spacing: 2.500px; }
.d-q { font-size: 13px; margin-left: 2px; font-family: "Liberation Sans", sans-serif; }
.d-x { margin-left: 35px; }
.d-body { padding: 0 6px; display: flex; flex-direction: column; }
.t { font-size: 12px; line-height: 18px; height: 18px; white-space: nowrap; }
.ind { margin-left: 18px; }
.off { color: #8a8a8a; }
.m3 { margin-top: 3px; } .m4 { margin-top: 4px; } .m5 { margin-top: 5px; } .m8 { margin-top: 8px; } .m16 { margin-top: 16px; }
.d-input {
  margin-left: 18px; width: 327px; height: 26px; box-sizing: border-box; background: #fff; border: 1px solid #a5a5a5;
  display: flex; align-items: center; padding-left: 3px; position: relative;
}
.sel { background: #c4c4c4; height: 18px; line-height: 18px; letter-spacing: .3px; }
.car { width: 1px; height: 18px; background: #111; }
.upbtn { position: absolute; right: 0; top: 0; width: 22px; height: 24px; display: flex; align-items: center; justify-content: center; background: #fff; border-right: 2px solid #b5b5b5; border-bottom: 2px solid #b5b5b5; box-sizing: border-box; border-left: 1px solid #e0e0e0; }
.d-btns1 { display: flex; justify-content: flex-end; gap: 10px; padding-right: 1px; }
.btn {
  width: 74px; height: 29px; box-sizing: border-box; background: #e1e1e1; border: 1px solid #adadad; padding: 0;
  font: inherit; font-size: 12px; color: #222; white-space: nowrap; word-spacing: 2px;
}
.d-list {
  position: relative; margin-left: 18px; width: 327px; height: 139px; box-sizing: border-box; background: #fff; border: 1px solid #8a8a8a; padding: 1px 0 0 1px;
}
.li { height: 17px; line-height: 17px; width: 306px; padding-left: 2px; box-sizing: border-box; letter-spacing: .3px; }
.li.cur { background: #0078d7; color: #d9f5ff; }
.ls-up { position: absolute; right: 3px; top: 8px; }
.ls-dn { position: absolute; right: 3px; bottom: 6px; }
.d-radios { display: flex; height: 18px; margin-left: 18px; }
.radio { width: 75px; display: flex; align-items: center; gap: 4px; font-family: "Liberation Sans", sans-serif; flex: none; }
.rd { width: 13px; height: 13px; border: 1px solid #555; border-radius: 50%; background: #fff; box-sizing: border-box; display: flex; align-items: center; justify-content: center; }
.rd.on::after { content: ""; width: 7px; height: 7px; background: #222; border-radius: 50%; }
.d-fields { display: flex; margin-left: 18px; margin-top: 3px; gap: 10px; }
.fld { width: 158px; display: flex; flex-direction: column; }
.fld:last-child { width: 159px; }
.fcombo { height: 26px; margin-top: 3px; box-sizing: border-box; border: 1px solid #ababab; background: #f0f0f0; box-shadow: inset 2px 2px 0 #fff; display: flex; justify-content: flex-end; }
.farrow { width: 17px; height: 24px; background: #e1e1e1; border-left: 1px solid #ababab; display: flex; align-items: center; justify-content: center; box-sizing: border-box; }
.d-foot { display: flex; margin-top: 16px; }
.f1 { width: 74px; }
.f2 { width: 82px; margin-left: 10px; }
.f3 { width: 84px; margin-left: 10px; border: 2px solid #2a6a92; }
.f4 { width: 74px; margin-left: 10px; }
.cursor { position: absolute; left: 119px; top: 372px; }
</style>

<style>
html, body { margin: 0; padding: 0; overflow: hidden; }
</style>
